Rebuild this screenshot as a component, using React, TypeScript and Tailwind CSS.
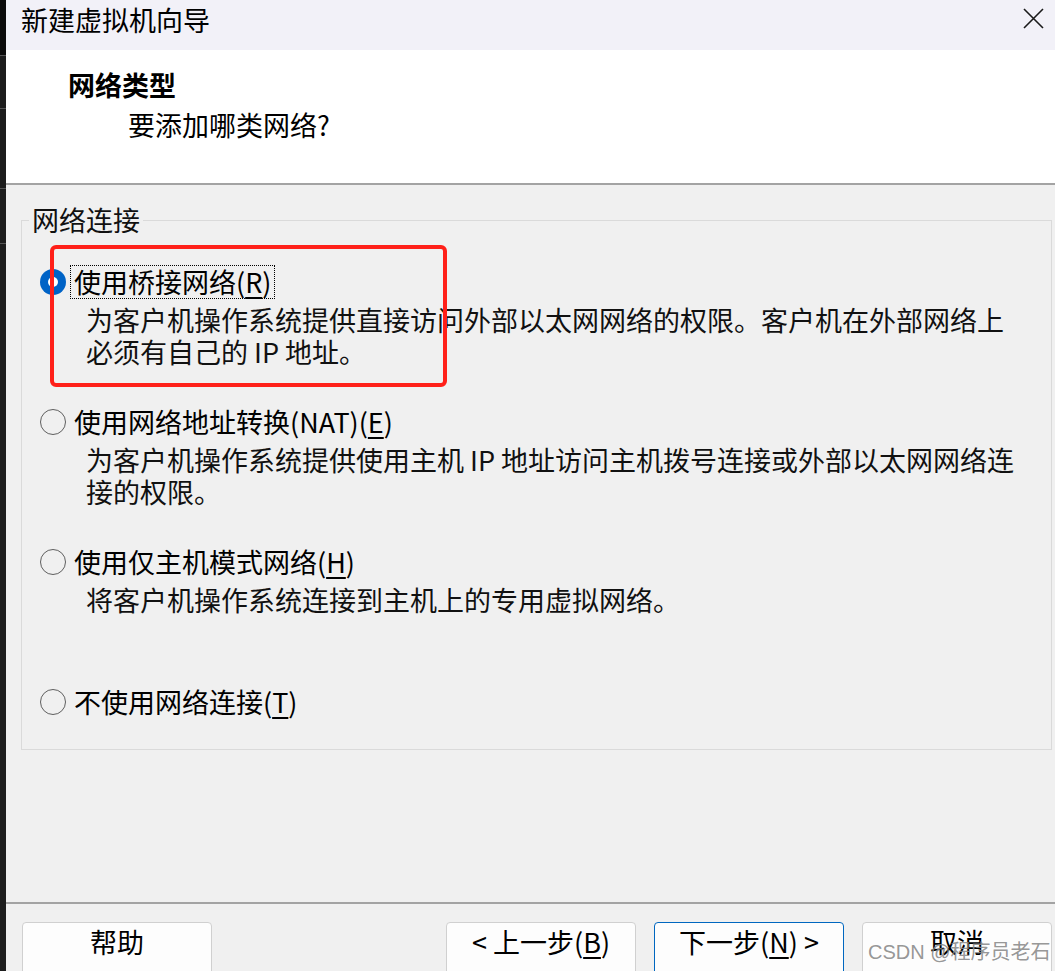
import type { ReactNode } from 'react';

const FONT = "font-['Noto_Sans_CJK_SC','Noto_Sans',sans-serif]";

interface OptionProps {
  checked?: boolean;
  focused?: boolean;
  label: ReactNode;
  lines?: string[];
  last?: boolean;
}

function Radio({ checked }: { checked?: boolean }) {
  if (checked) {
    return (
      <div className="w-[26px] h-[26px] rounded-full bg-[#0063c6] flex items-center justify-center shrink-0">
        <div className="w-[10px] h-[10px] rounded-full bg-white" />
      </div>
    );
  }
  return <div className="w-[26px] h-[26px] rounded-full border-[1.5px] border-[#5f5f5f] shrink-0" />;
}

function NetOption({ checked, focused, label, lines = [], last }: OptionProps) {
  return (
    <div className={last ? 'h-[32px]' : 'h-[140px]'}>
      <div className="flex items-center h-[32px]">
        <Radio checked={checked} />
        <span
          className={`ml-[5px] px-[3px] leading-[32px] ${
            focused ? 'outline-1 outline-dotted outline-black' : ''
          }`}
        >
          {label}
        </span>
      </div>
      {lines.length > 0 && (
        <div className="mt-[6px] pl-[46px] leading-[32px] text-[#111]">
          {lines.map((l) => (
            <div key={l} className="whitespace-nowrap">
              {l}
            </div>
          ))}
        </div>
      )}
    </div>
  );
}

function WizButton({ children, primary }: { children: ReactNode; primary?: boolean }) {
  return (
    <div
      className={`w-[190px] h-[54px] bg-[#fdfdfd] rounded-[4px] border flex justify-center pt-[3px] leading-[32px] ${
        primary ? 'border-[#0067c0]' : 'border-[#d0d0d0]'
      }`}
    >
      {children}
    </div>
  );
}

export default function App() {
  return (
    <div className={`relative w-[1055px] h-[971px] overflow-hidden flex text-[27px] text-black ${FONT}`}>
      {/* desktop behind the dialog */}
      <div className="w-[6px] bg-[#1d1d1d] flex flex-col">
        <div className="h-[55px] bg-[#0b0b0b]" />
        <div className="h-[53px] border-t border-[#555]" />
        <div className="h-[80px] border-t border-[#555]" />
        <div className="h-[55px] border-t border-[#555]" />
        <div className="flex-1 border-t border-[#555]" />
      </div>

      <div className="flex-1 flex flex-col">
        {/* title bar */}
        <div className="h-[50px] bg-[#f2f1f8] flex items-center justify-between pl-[15px] pr-[11px] shrink-0">
          <span className="leading-[32px] -mt-[10px]">新建虚拟机向导</span>
          <svg width="21" height="21" viewBox="0 0 21 21" className="-mt-[14px]">
            <path d="M1 1L20 20M20 1L1 20" stroke="#1a1a1a" strokeWidth="1.6" />
          </svg>
        </div>

        {/* header */}
        <div className="h-[135px] bg-white border-b-2 border-[#a3a3a3] shrink-0 pl-[62px] pt-[19px]">
          <div className="font-bold leading-[32px]">网络类型</div>
          <div className="mt-[8px] ml-[60px] leading-[32px]">要添加哪类网络?</div>
        </div>

        {/* body */}
        <div className="flex-1 bg-[#f0f0f0] flex flex-col">
          <div className="flex-1">
            <fieldset className="mt-[19px] ml-[15px] mr-[3px] border border-[#dadada] pb-[31px]">
              <legend className="ml-[7px] px-[3px] leading-[32px] text-[#111]">网络连接</legend>
              <div className="pt-[30px] pl-[18px]">
                <NetOption
                  checked
                  focused
                  label={
                    <>
                      使用桥接网络(<span className="underline underline-offset-4">R</span>)
                    </>
                  }
                  lines={['为客户机操作系统提供直接访问外部以太网网络的权限。客户机在外部网络上', '必须有自己的 IP 地址。']}
                />
                <NetOption
                  label={
                    <>
                      使用网络地址转换(NAT)(<span className="underline underline-offset-4">E</span>)
                    </>
                  }
                  lines={['为客户机操作系统提供使用主机 IP 地址访问主机拨号连接或外部以太网网络连', '接的权限。']}
                />
                <NetOption
                  label={
                    <>
                      使用仅主机模式网络(<span className="underline underline-offset-4">H</span>)
                    </>
                  }
                  lines={['将客户机操作系统连接到主机上的专用虚拟网络。']}
                />
                <NetOption
                  last
                  label={
                    <>
                      不使用网络连接(<span className="underline underline-offset-4">T</span>)
                    </>
                  }
                />
              </div>
            </fieldset>
          </div>

          {/* footer */}
          <div className="h-[69px] shrink-0 border-t-2 border-[#a3a3a3] pt-[18px] pl-[16px] pr-[3px] flex justify-between">
            <WizButton>帮助</WizButton>
            <div className="flex gap-[18px]">
              <WizButton>
                &lt; 上一步(<span className="underline underline-offset-4">B</span>)
              </WizButton>
              <WizButton primary>
                下一步(<span className="underline underline-offset-4">N</span>) &gt;
              </WizButton>
              <WizButton>取消</WizButton>
            </div>
          </div>
        </div>
      </div>

      {/* watermark */}
      <div className="absolute left-[868px] top-[938px] text-[20px] leading-[28px] text-[#8a8a8a]/90 whitespace-nowrap font-['Liberation_Sans','Noto_Sans_CJK_SC',sans-serif]">
        CSDN @程序员老石
      </div>

      {/* red annotation box */}
      <div className="absolute left-[50px] top-[245px] w-[397px] h-[142px] border-[4px] border-[#ff2019] rounded-[6px]" />
    </div>
  );
}
